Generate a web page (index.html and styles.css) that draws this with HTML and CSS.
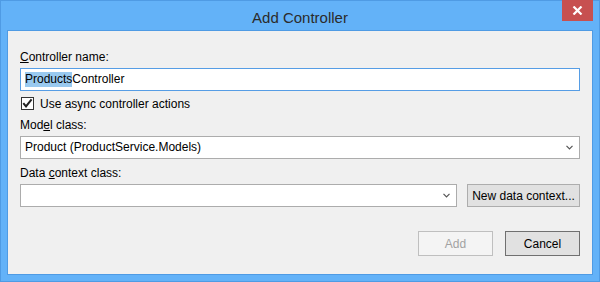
FILE: index.html
```html
<!DOCTYPE html>
<html lang="en">
<head>
    <meta charset="UTF-8">
    <title>Add Controller</title>
    <link rel="stylesheet" href="styles.css">
</head>
<body>

<div class="window">
    <div class="titlebar">
        <span class="title">Add Controller</span>
        <div class="close">
            <svg width="11" height="9" viewBox="0 0 11 9"><path d="M1.5 0.5 L9.5 8.5 M9.5 0.5 L1.5 8.5" stroke="#fff" stroke-width="2.2"/></svg>
        </div>
    </div>

    <div class="client">
        <div class="label"><u>C</u>ontroller name:</div>
        <div class="textbox focused"><span class="selected">Products</span>Controller</div>

        <div class="check-row">
            <span class="checkbox">
                <svg width="11" height="11" viewBox="0 0 11 11"><path d="M1.3 5.2 L4 8.4 L9.6 1.4" fill="none" stroke="#222" stroke-width="2"/></svg>
            </span>
            <span>Use async controller actions</span>
        </div>

        <div class="label">Mod<u>e</u>l class:</div>
        <div class="textbox combo">
            <span>Product (ProductService.Models)</span>
            <svg class="chevron" width="7" height="5" viewBox="0 0 7 5"><path d="M0.5 0.8 L3.5 3.8 L6.5 0.8" fill="none" stroke="#555" stroke-width="1.2"/></svg>
        </div>

        <div class="label">Data <u>c</u>ontext class:</div>
        <div class="data-row">
            <div class="textbox combo wide">
                <span></span>
                <svg class="chevron" width="7" height="5" viewBox="0 0 7 5"><path d="M0.5 0.8 L3.5 3.8 L6.5 0.8" fill="none" stroke="#555" stroke-width="1.2"/></svg>
            </div>
            <button class="btn new-context">New data context...</button>
        </div>

        <div class="actions">
            <button class="btn disabled">Add</button>
            <button class="btn default">Cancel</button>
        </div>
    </div>
</div>

</body>
</html>
```

FILE: styles.css
```css
body {
    margin: 0;
    font-family: "Liberation Sans", Arial, sans-serif;
    font-size: 12px;
    color: #000;
}
.window {
    position: relative;
    box-sizing: border-box;
    width: 600px;
    height: 282px;
    border: 1px solid #4f9be4;
    background-color: #63b2f8;
}
.titlebar {
    height: 29px;
    box-sizing: border-box;
    padding-top: 5px;
    text-align: center;
}
.title {
    font-size: 15px;
    line-height: 24px;
    color: #2b2b2b;
}
.close {
    position: absolute;
    top: -1px;
    right: 6px;
    width: 31px;
    height: 21px;
    background-color: #c75050;
    display: flex;
    align-items: center;
    justify-content: center;
}
.client {
    box-sizing: border-box;
    height: 245px;
    margin: 0 6px;
    border: 1px solid #4f9be4;
    background-color: #f0f0f0;
    padding: 19px 12px 0 12px;
}
.label {
    line-height: 15px;
    margin-bottom: 3px;
}
.textbox {
    box-sizing: border-box;
    height: 23px;
    border: 1px solid #acacac;
    background: white;
    padding-left: 4px;
    line-height: 21px;
    display: flex;
    align-items: center;
}
.textbox.focused {
    border-color: #569de5;
}
.selected {
    background-color: #99c9ef;
    line-height: 15px;
}
.combo {
    justify-content: space-between;
    padding-right: 6px;
}
.chevron {
    display: block;
}
.check-row {
    display: flex;
    align-items: center;
    gap: 6px;
    margin: 6px 0 8px 1px;
    height: 13px;
}
.checkbox {
    box-sizing: border-box;
    width: 13px;
    height: 13px;
    border: 1px solid #333;
    background: white;
    display: flex;
    align-items: center;
    justify-content: center;
}
.textbox.combo {
    margin-bottom: 7px;
}
.data-row {
    display: flex;
    gap: 10px;
}
.data-row .textbox.combo {
    margin-bottom: 0;
}
.wide {
    flex: 1;
}
.btn {
    box-sizing: border-box;
    font-family: "Liberation Sans", Arial, sans-serif;
    font-size: 12px;
    color: #000;
    background-color: #e1e1e1;
    border: 1px solid #adadad;
    padding: 0;
    margin: 0;
}
.new-context {
    width: 113px;
    height: 23px;
}
.actions {
    display: flex;
    justify-content: flex-end;
    gap: 12px;
    margin-top: 24px;
}
.actions .btn {
    width: 75px;
    height: 25px;
}
.btn.disabled {
    background-color: #f4f4f4;
    border-color: #bfbfbf;
    color: #a2a2a2;
}
.btn.default {
    border-color: #707070;
}
```
